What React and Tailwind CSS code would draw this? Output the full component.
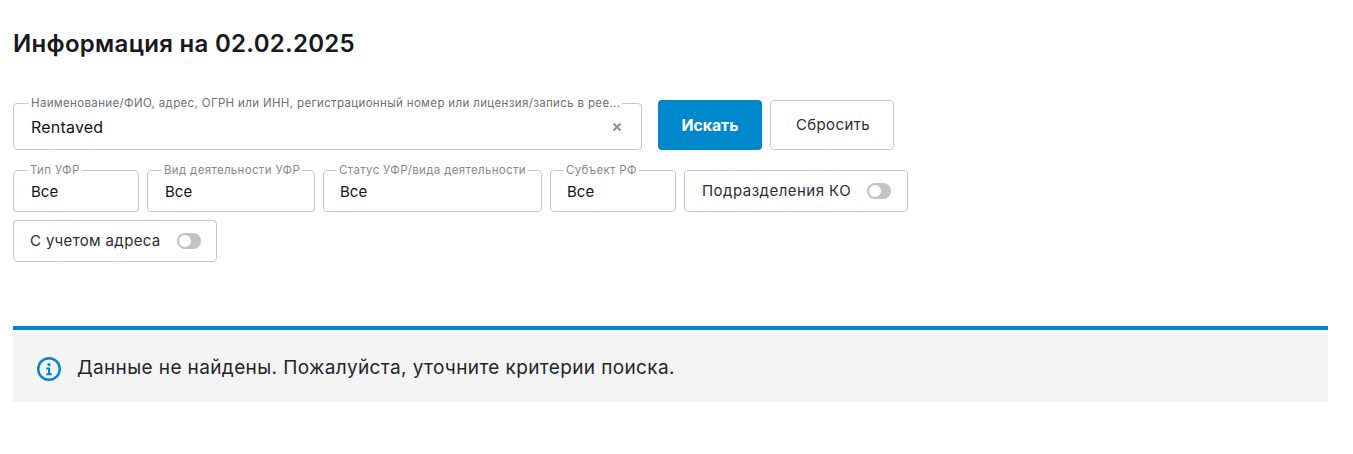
import React from 'react';

function Field({ label, value, className, shift }) {
  return <fieldset className={`h-[48px] rounded-[4px] border border-[#c6c8cc] pr-2 ${shift ? 'pl-[15px]' : 'pl-4'} ${className}`}>
      <legend className="-ml-[2px] px-[2px] text-[11.5px] leading-[12px] tracking-[0.33px] text-[#85898f] whitespace-nowrap">{label}</legend>
      <div className="ml-px mt-[6px] text-[15px] leading-[20px] text-[#101418]">{value}</div>
    </fieldset>;
}

function Toggle({ label, className }) {
  return <div className={`flex h-[42px] items-center rounded-[4px] border border-[#c6c8cc] ${className}`}>
      <span className="text-[15px] leading-[20px] text-[#2a2e33]">{label}</span>
      <span className="ml-4 flex h-[16px] w-[24px] items-center rounded-full bg-[#c1c3c8] pl-[2px]">
        <span className="h-[12px] w-[12px] rounded-full bg-white" />
      </span>
    </div>;
}

export default function App() {
  return <div className="min-h-[454px] bg-white pt-[28px] pl-[13px] pr-[25px] [font-family:Inter,'Noto_Sans',sans-serif]">
      <h1 className="text-[24px] leading-[32px] font-semibold tracking-[0.3px] text-[#16191d]">Информация на 02.02.2025</h1>
      <div className="mt-[37px] flex items-end gap-4">
        <fieldset className="relative h-[53px] w-[629px] rounded-[4px] border border-[#c6c8cc] pl-4 pr-2">
          <legend className="-ml-[1px] px-[2px] text-[11.5px] leading-[12px] tracking-[0.35px] text-[#6c7077] whitespace-nowrap">Наименование/ФИО, адрес, ОГРН или ИНН, регистрационный номер или лицензия/запись в рее...</legend>
          <div className="ml-px mt-[8px] flex items-center justify-between pr-[11px]">
            <span className="text-[16px] leading-[20px] tracking-[0.2px] text-[#101418]">Rentaved</span>
            <svg width="10" height="10" viewBox="0 0 10 10" className="text-[#8b8f95]"><path d="M1.5 1.5l7 7M8.5 1.5l-7 7" stroke="currentColor" strokeWidth="2" /></svg>
          </div>
        </fieldset>
        <div className="flex gap-2">
          <button className="h-[50px] w-[104px] rounded-[4px] bg-[#0088cc] pt-[1px] text-[15.8px] font-bold text-white">Искать</button>
          <button className="h-[50px] w-[124px] rounded-[4px] border border-[#c6c8cc] bg-white pt-[1px] pl-[2px] text-[15px] tracking-[0.38px] text-[#2a2e33]">Сбросить</button>
        </div>
      </div>
      <div className="mt-[14px] flex w-[900px] flex-wrap items-end gap-2">
        <Field label="Тип УФР" value="Все" className="w-[126px]" />
        <Field label="Вид деятельности УФР" value="Все" className="w-[168px]" />
        <Field label="Статус УФР/вида деятельности" value="Все" shift className="w-[219px]" />
        <Field label="Субъект РФ" value="Все" shift className="w-[126px]" />
        <Toggle label="Подразделения КО" className="w-[224px] pl-[17px] tracking-[0.47px]" />
        <Toggle label="С учетом адреса" className="w-[204px] pl-[16px] tracking-[0.35px]" />
      </div>
      <div className="mt-[64px] flex h-[76px] items-center border-t-4 border-[#0088cc] bg-[#f4f4f4] pl-6">
        <svg width="24" height="24" viewBox="0 0 24 24" fill="none" className="mt-[5px] shrink-0 text-[#0088cc]">
          <circle cx="12" cy="12" r="10.8" stroke="currentColor" strokeWidth="2.4" />
          <circle cx="12" cy="7.6" r="1.6" fill="currentColor" />
          <path d="M9.3 10.6H13.2v5.7h1.6v1.9H9.2v-1.9H11v-3.8H9.3z" fill="currentColor" />
        </svg>
        <span className="ml-[16px] mt-[3px] text-[19px] leading-[26px] tracking-[0.38px] text-[#22262b]">Данные не найдены. Пожалуйста, уточните критерии поиска.</span>
      </div>
    </div>;
}
